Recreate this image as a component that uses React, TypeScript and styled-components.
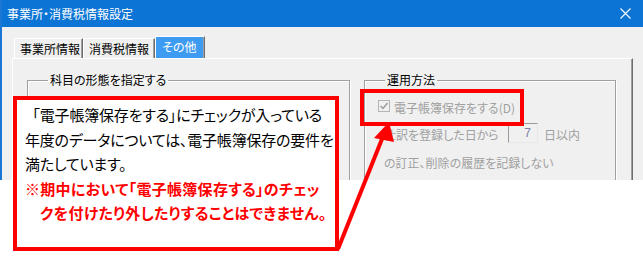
import styled, { createGlobalStyle } from "styled-components";

function App() {
  return (
    <Page>
      <GlobalStyle />
      <Window>
        <TitleBar>
          <Title>事業所・消費税情報設定</Title>
          <CloseIcon viewBox="0 0 11 11">
            <path d="M0.5 0.5 L10.5 10.5 M10.5 0.5 L0.5 10.5" />
          </CloseIcon>
        </TitleBar>
        <Body>
          <Tabs>
            <Tab $w={69}>事業所情報</Tab>
            <Tab $w={72}>消費税情報</Tab>
            <Tab $w={50} $active>
              その他
            </Tab>
          </Tabs>
          <Panel>
            <Group $w={323}>
              <Legend>科目の形態を指定する</Legend>
            </Group>
            <Group $w={252}>
              <Legend>運用方法</Legend>
              <CheckRow>
                <CheckBox>
                  <svg viewBox="0 0 10 10" width="10" height="10">
                    <path d="M1.5 5 L4 7.5 L8.5 2" />
                  </svg>
                </CheckBox>
                <Muted>電子帳簿保存をする(D)</Muted>
              </CheckRow>
              <Row $indent={6}>
                <Muted $w={124}>仕訳を登録した日から</Muted>
                <NumBox>7</NumBox>
                <Muted $ml={6}>日以内</Muted>
              </Row>
              <Row $indent={6} $mt={9}>
                <Muted>の訂正、削除の履歴を記録しない</Muted>
              </Row>
            </Group>
          </Panel>
        </Body>
      </Window>

      <Highlight />
      <Callout>
        <Note>
          <Open>「</Open>電子帳簿保存をする」にチェックが入っている
          <br />
          年度のデータについては、電子帳簿保存の要件を
          <br />
          満たしています。
        </Note>
        <Warning>
          ※期中において「電子帳簿保存する」のチェッ
          <br />
          クを付けたり外したりすることはできません。
        </Warning>
      </Callout>
      <Pointer viewBox="0 0 643 275">
        <line x1="338" y1="249" x2="384" y2="134" />
        <polygon points="389,122 374,138 394,142" />
      </Pointer>
    </Page>
  );
}

export default App;

const Page = styled.div`
  position: relative;
  width: 643px;
  height: 275px;
  background: #ffffff;
  overflow: hidden;
`;

const Window = styled.div`
  width: 643px;
  height: 180px;
  display: flex;
  flex-direction: column;
  overflow: hidden;
  background: #f0f0f0;
  border-left: 2px solid #1a78d4;
`;

const TitleBar = styled.div`
  height: 27px;
  flex-shrink: 0;
  margin-left: -2px;
  display: flex;
  align-items: center;
  justify-content: space-between;
  padding: 0 12px 0 7px;
  background: #0b74d5;
`;

const Title = styled.span`
  color: #ffffff;
  font-size: 12px;
  line-height: 14px;
`;

const CloseIcon = styled.svg`
  width: 11px;
  height: 11px;
  stroke: #ffffff;
  stroke-width: 1.1;
  fill: none;
`;

const Body = styled.div`
  flex: 1;
  padding: 9px 0 0 10px;
  display: flex;
  flex-direction: column;
`;

const Tabs = styled.div`
  display: flex;
  align-items: flex-end;
  padding-left: 2px;
  height: 22px;
`;

const Tab = styled.div<{ $w: number; $active?: boolean }>`
  width: ${(p) => p.$w}px;
  height: ${(p) => (p.$active ? 22 : 20)}px;
  padding: ${(p) => (p.$active ? "3px 0 0 6px" : "3px 0 0 5px")};
  font-size: 12px;
  line-height: 14px;
  color: ${(p) => (p.$active ? "#ffffff" : "#000000")};
  background: ${(p) => (p.$active ? "#3d9bf2" : "#f0f0f0")};
  border-top: 1px solid #ffffff;
  border-left: 1px solid #ffffff;
  border-right: 1px solid #6d6d6d;
  box-shadow: inset -1px 0 0 #a0a0a0;
`;

const Panel = styled.div`
  width: 621px;
  flex: 1;
  display: flex;
  gap: 14px;
  padding: 14px 0 0 14px;
  border-top: 1px solid #ffffff;
  border-left: 1px solid #ffffff;
  border-right: 1px solid #6d6d6d;
  box-shadow: inset -1px 0 0 #a0a0a0;
`;

const Group = styled.fieldset<{ $w: number }>`
  width: ${(p) => p.$w}px;
  height: 140px;
  margin: 0;
  padding: 0 0 0 13px;
  min-width: 0;
  border: 1px solid #a0a0a0;
  box-shadow: inset 1px 1px 0 #ffffff, 1px 1px 0 #ffffff;
  display: flex;
  flex-direction: column;
`;

const Legend = styled.legend`
  margin-left: 7px;
  padding: 0 2px;
  font-size: 12px;
  line-height: 14px;
  color: #000000;
`;

const CheckRow = styled.div`
  display: flex;
  align-items: center;
  gap: 4px;
  height: 16px;
  margin-top: 11px;
`;

const CheckBox = styled.div`
  width: 12px;
  height: 12px;
  display: flex;
  align-items: center;
  justify-content: center;
  border: 1px solid #b4b4b4;
  background: #f0f0f0;

  svg {
    fill: none;
    stroke: #9c9c9c;
    stroke-width: 1.5;
  }
`;

const Row = styled.div<{ $indent: number; $mt?: number }>`
  display: flex;
  align-items: center;
  min-height: 16px;
  padding-left: ${(p) => p.$indent}px;
  margin-top: ${(p) => p.$mt ?? 9}px;
`;

const Muted = styled.span<{ $w?: number; $ml?: number }>`
  width: ${(p) => (p.$w ? `${p.$w}px` : "auto")};
  margin-left: ${(p) => p.$ml ?? 0}px;
  font-size: 12px;
  line-height: 16px;
  color: #a0a0a0;
  white-space: nowrap;
  padding-top: 3px;
`;

const NumBox = styled.div`
  width: 30px;
  height: 20px;
  padding-right: 6px;
  text-align: right;
  font-size: 12px;
  line-height: 18px;
  color: #7b80ac;
  border-top: 1px solid #9a9a9a;
  border-left: 1px solid #9a9a9a;
  border-right: 1px solid #e8e8e8;
  border-bottom: 1px solid #e8e8e8;
  font-family: "Liberation Sans", sans-serif;
`;

const Highlight = styled.div`
  position: absolute;
  left: 360px;
  top: 89px;
  width: 164px;
  height: 37px;
  border: 4px solid #ff0000;
`;

const Callout = styled.div`
  position: absolute;
  left: 13px;
  top: 96px;
  width: 326px;
  height: 155px;
  padding: 3px 0 0 8px;
  background: #ffffff;
  border: 4px solid #ff0000;
  white-space: nowrap;
`;

const Note = styled.p`
  font-size: 15px;
  line-height: 24.5px;
  letter-spacing: -0.2px;
  color: #000000;
`;

const Open = styled.span`
  font-feature-settings: normal;
`;

const Warning = styled.p`
  font-size: 15px;
  line-height: 24.5px;
  letter-spacing: 0.3px;
  font-weight: 700;
  color: #ff0000;
  padding-left: 15px;
  text-indent: -15px;
`;

const Pointer = styled.svg`
  position: absolute;
  left: 0;
  top: 0;
  width: 643px;
  height: 275px;
  pointer-events: none;

  line {
    stroke: #ff0000;
    stroke-width: 4;
  }

  polygon {
    fill: #ff0000;
  }
`;

const GlobalStyle = createGlobalStyle`
  * {
    margin: 0;
    padding: 0;
    box-sizing: border-box;
  }

  body {
    margin: 0;
    background: #ffffff;
    font-family: "Noto Sans CJK JP", "Noto Sans", sans-serif;
    font-feature-settings: "palt";
  }
`;
